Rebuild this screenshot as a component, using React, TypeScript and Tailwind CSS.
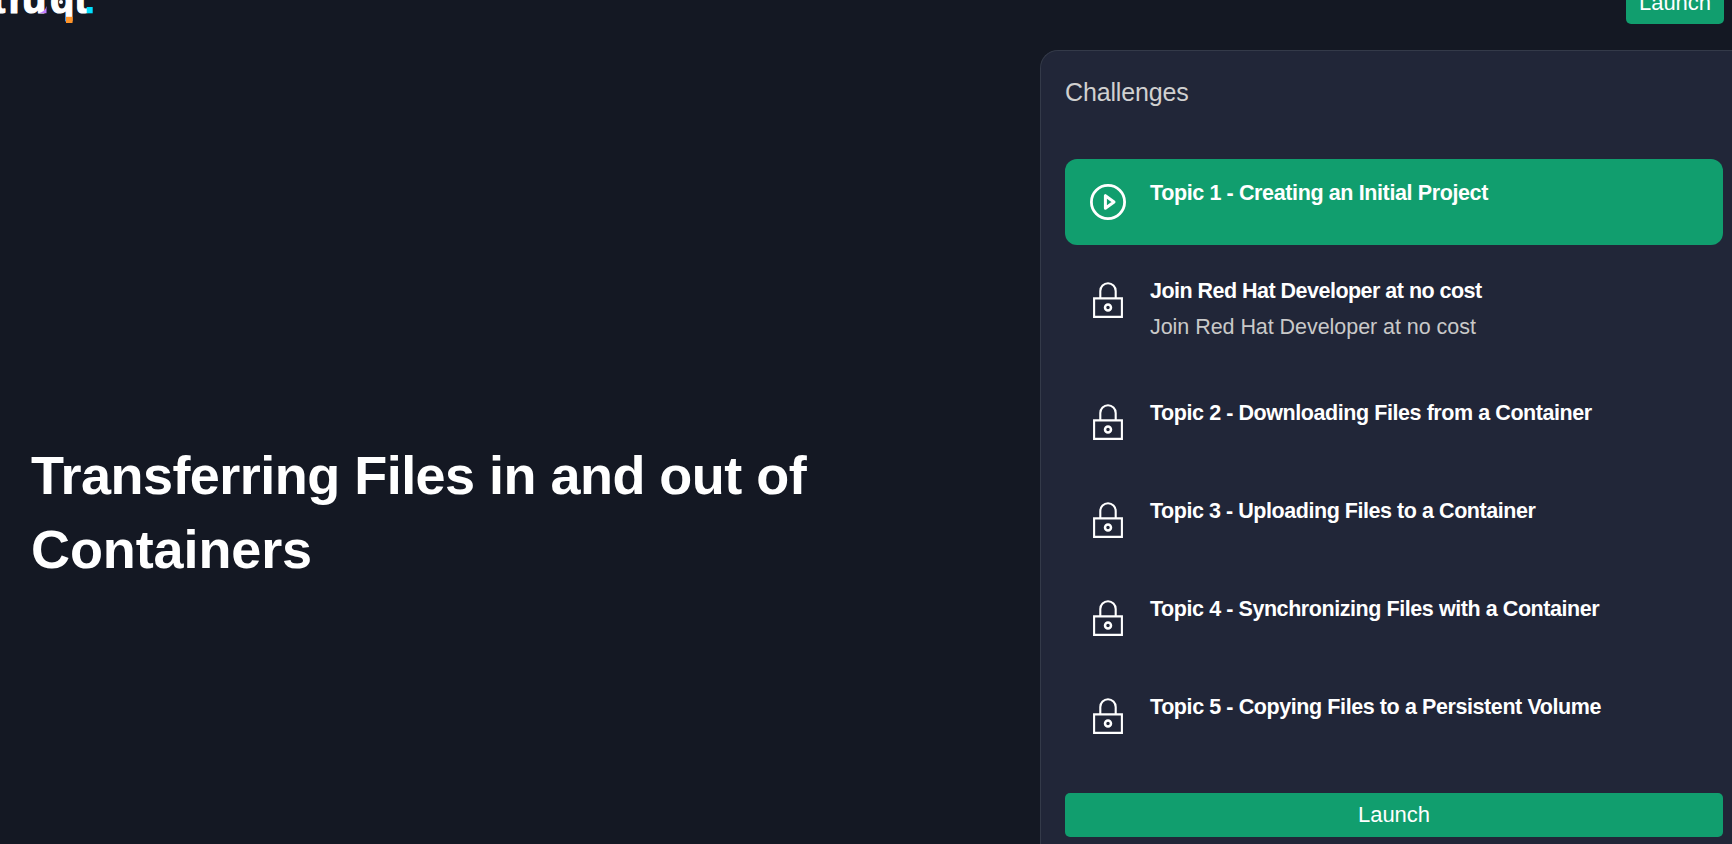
type Challenge = {
  title: string;
  tracking: string;
  description?: string;
  active?: boolean;
};

const challenges: Challenge[] = [
  { title: "Topic 1 - Creating an Initial Project", tracking: "tracking-[-0.38px]", active: true },
  {
    title: "Join Red Hat Developer at no cost",
    tracking: "tracking-[-0.52px]",
    description: "Join Red Hat Developer at no cost",
  },
  { title: "Topic 2 - Downloading Files from a Container", tracking: "tracking-[-0.43px]" },
  { title: "Topic 3 - Uploading Files to a Container", tracking: "tracking-[-0.45px]" },
  { title: "Topic 4 - Synchronizing Files with a Container", tracking: "tracking-[-0.43px]" },
  { title: "Topic 5 - Copying Files to a Persistent Volume", tracking: "tracking-[-0.41px]" },
];

function PlayIcon() {
  return (
    <svg className="size-9" viewBox="0 0 36 36" fill="none" stroke="white" strokeWidth="2.8" strokeLinejoin="round">
      <circle cx="18" cy="18" r="16.6" />
      <path d="M15.400 11.700v12.600l8.600-6.300z" strokeWidth="3" />
    </svg>
  );
}

function LockIcon() {
  return (
    <svg className="size-9" viewBox="0 0 36 36" fill="none" stroke="white" strokeWidth="2.1">
      <path d="M4.100 16.400h27.800v18.500H4.100z" />
      <path d="M10.300 16.500V9a7.700 7.700 0 0 1 15.400 0v7.500" />
      <circle cx="18" cy="25.500" r="3" strokeWidth="2.500" />
    </svg>
  );
}

function Logo() {
  return (
    <svg className="h-[26px] w-24" viewBox="0 0 96 26">
      <text
        y="12.5"
        x="-8 8.500 22 50 74.500"
        fontSize="40"
        fontWeight="700"
        fill="white"
        stroke="white"
        strokeWidth="1.2"
        strokeLinejoin="round"
      >
        truqt
      </text>
      <circle cx="61" cy="2" r="2" fill="white" />
      <path d="M46.500 6v7.200H38.500c4.500-.8 7-3.200 8-7.200z" fill="#c07cff" />
      <path d="M66 16.800h6.500V23H66z" fill="#ff9429" />
      <path d="M86.700 7h6v6.300h-6z" fill="#00e0ff" />
    </svg>
  );
}

function ChallengeRow({ title, tracking, description, active }: Challenge) {
  return (
    <li
      className={`flex items-start gap-6 rounded-xl pl-[25px] ${active ? "bg-[#119e6e]" : ""} ${
        description ? "h-[110px]" : "h-[86px]"
      }`}
    >
      <div className="mt-[25px] shrink-0">{active ? <PlayIcon /> : <LockIcon />}</div>
      <div className="mt-4 text-[21.5px] leading-9 whitespace-nowrap">
        <h3 className={`font-bold ${tracking}`}>{title}</h3>
        {description && <p className="tracking-[-0.05px] text-[#c9c9c9]">{description}</p>}
      </div>
    </li>
  );
}

export default function App() {
  return (
    <div className="flex h-[844px] w-[1732px] flex-col overflow-hidden bg-[#141823] font-['Liberation_Sans',sans-serif] text-white">
      <header className="flex h-[50px] shrink-0 items-start justify-between pr-2">
        <Logo />
        <button className="flex h-6 w-[98px] items-end justify-center overflow-hidden rounded-b-[5px] bg-[#119e6e] pb-2 text-[22px] leading-[26px]">
          Launch
        </button>
      </header>
      <main className="flex min-h-0 flex-1">
        <section className="w-[1040px] shrink-0 pt-[388px] pl-[31px]">
          <h1 className="w-[900px] text-[54px] leading-[74px] font-bold tracking-[-0.53px]">
            Transferring Files in and out of
            <br />
            <span className="tracking-[-0.1px]">Containers</span>
          </h1>
        </section>
        <aside className="flex flex-1 flex-col rounded-tl-[18px] border-t border-l border-[#343a49] bg-[#212638] pr-[9px] pl-6">
          <h2 className="mt-[23px] h-9 text-[25px] leading-9 tracking-[-0.15px] text-[#d0d0d0]">Challenges</h2>
          <ul className="mt-[49px] flex flex-col gap-3">
            {challenges.map((challenge) => (
              <ChallengeRow key={challenge.title} {...challenge} />
            ))}
          </ul>
          <button className="mt-[34px] h-11 shrink-0 rounded-[5px] bg-[#119e6e] pb-0.5 text-[22px]">Launch</button>
        </aside>
      </main>
    </div>
  );
}
